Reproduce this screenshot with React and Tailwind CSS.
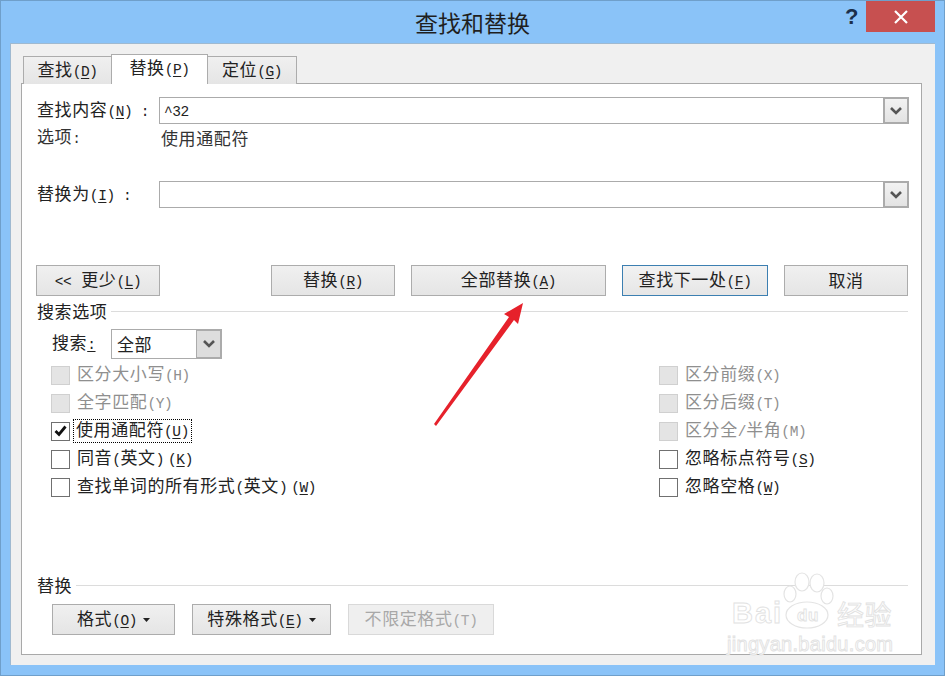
const FONT = "font-['Noto_Sans_CJK_SC',sans-serif]";
const LATIN = "font-['Liberation_Mono',monospace] text-[14.5px] tracking-[-0.4px]";

// "&X" marks the mnemonic letter, as in a Win32 dialog resource
function Txt({ children }) {
  const parts = children.match(/&.|[\x00-\x7f]+?(?=&|[^\x00-\x7f]|$)|[^\x00-\x7f&]+/g) || [];
  return (
    <span className="inline-block whitespace-pre pb-[2px]">
      {parts.map((p, i) => {
        if (p[0] === '&') {
          return <span key={i} className={`${LATIN} underline underline-offset-2`}>{p[1]}</span>;
        }
        if (p.charCodeAt(0) < 128) {
          return <span key={i} className={LATIN}>{p}</span>;
        }
        return <span key={i}>{p}</span>;
      })}
    </span>
  );
}

function Chevron() {
  return (
    <svg width="14" height="10" viewBox="0 0 14 10" fill="none">
      <path d="M2 2 L7 7 L12 2" stroke="#555555" strokeWidth="2.6" />
    </svg>
  );
}

function DropArrow() {
  return (
    <svg className="ml-[6px]" width="7" height="4" viewBox="0 0 7 4">
      <path d="M0 0 H7 L3.5 4 Z" fill="#222222" />
    </svg>
  );
}

function Combo({ children }) {
  return (
    <div className="flex h-[27px] w-[750px] shrink-0 border border-[#ababab] bg-white">
      <div className="flex-1 pl-1 leading-[22px]">{children}</div>
      <div className="-my-px -mr-px flex w-[26px] items-center justify-center border-2 border-[#ababab] bg-gradient-to-b from-[#f2f2f2] to-[#e3e3e3]">
        <Chevron />
      </div>
    </div>
  );
}

function Btn({ className = '', children, focused, disabled }) {
  let tone = 'border-[#acacac] bg-gradient-to-b from-[#f0f0f0] to-[#e5e5e5] text-[#222]';
  if (focused) tone = 'border-[#3c7fb1] bg-gradient-to-b from-[#f2f2f2] to-[#e6e6e6] text-[#222]';
  if (disabled) tone = 'border-[#d9d9d9] bg-[#efefef] text-[#a8a8a8]';
  return (
    <div className={`flex h-[31px] shrink-0 items-center justify-center border ${tone} ${className}`}>
      {children}
    </div>
  );
}

function Check({ label, disabled, checked, focused }) {
  return (
    <div className="flex h-[28px] items-center">
      <div className={`flex h-[19px] w-[19px] items-center justify-center border ${disabled ? 'border-[#d0d0d0] bg-[#e4e4e4]' : 'border-[#707070] bg-white'}`}>
        {checked && (
          <svg width="13" height="12" viewBox="0 0 13 12" fill="none">
            <path d="M1.5 6 L5 9.5 L11.5 1.5" stroke="#111111" strokeWidth="2.8" />
          </svg>
        )}
      </div>
      <div className={`${disabled ? 'text-[#8f8f8f]' : 'text-[#222]'} ${focused ? 'ml-[4px] px-[2px] outline-1 outline-dotted outline-black' : 'ml-[7px]'}`}>
        <Txt>{label}</Txt>
      </div>
    </div>
  );
}

function Section({ title, className = '' }) {
  return (
    <div className={`flex h-[30px] items-center ${className}`}>
      <span className="mr-[4px]"><Txt>{title}</Txt></span>
      <div className="h-px flex-1 bg-[#dcdcdc]" />
    </div>
  );
}

function Watermark() {
  return (
    <svg className="absolute left-[720px] top-[568px]" width="180" height="90" viewBox="0 0 180 90">
      <g fill="#ffffff" stroke="#e4e4e4" strokeWidth="1.2">
        <ellipse cx="81" cy="13" rx="7" ry="9" />
        <ellipse cx="96" cy="14" rx="7" ry="9" />
        <ellipse cx="69" cy="25" rx="6" ry="8" />
        <ellipse cx="106" cy="27" rx="6" ry="8" />
        <ellipse cx="86" cy="46" rx="21" ry="13" />
      </g>
      <g fill="#ffffff" stroke="#e2e2e2" strokeWidth="0.9" fontFamily="'Liberation Sans', sans-serif">
        <text x="11" y="54" fontSize="29" letterSpacing="2" fontWeight="700">Bai</text>
        <text x="76" y="52" fontSize="17" fontWeight="700">du</text>
        <text x="116" y="56" fontSize="27" fontFamily="'Noto Sans CJK SC', sans-serif">经验</text>
        <text x="6" y="82" fontSize="20" letterSpacing="0.3">jingyan.baidu.com</text>
      </g>
    </svg>
  );
}

export default function App() {
  return (
    <div className={`relative h-[676px] w-[945px] overflow-hidden border border-[#6f9fca] bg-[#8ac3f8] px-[9px] text-[17px] leading-none tracking-[0.6px] text-[#222] ${FONT}`}>
      {/* title bar */}
      <div className="relative flex h-[42px] items-center justify-center">
        <span className="text-[23px] tracking-normal text-[#1f1f1f]">查找和替换</span>
        <span className="absolute right-[76px] top-[5px] font-['Liberation_Sans',sans-serif] text-[22px] font-bold text-[#1c2f4a]">?</span>
        <div className="absolute right-0 top-0 flex h-[31px] w-[69px] items-center justify-center bg-[#c75050]">
          <svg width="16" height="14" viewBox="0 0 16 14" fill="none">
            <path d="M2 1 L14 13 M14 1 L2 13" stroke="#ffffff" strokeWidth="2.2" />
          </svg>
        </div>
      </div>

      {/* client area */}
      <div className="h-[622px] w-[925px] border-l border-t border-[#9fb9d0] bg-[#f0f0f0] px-[10px] pt-[10px]">
        {/* tabs */}
        <div className="relative z-10 flex h-[30px] items-end pl-[2px]">
          <div className="flex h-[28px] w-[89px] items-center justify-center border border-b-0 border-[#acacac] bg-gradient-to-b from-[#f0f0f0] to-[#e5e5e5] pt-px">
            <Txt>查找(&D)</Txt>
          </div>
          <div className="-ml-px flex h-[30px] w-[97px] items-center justify-center border border-b-0 border-[#acacac] bg-white pb-[2px]">
            <Txt>替换(&P)</Txt>
          </div>
          <div className="-ml-px flex h-[28px] w-[90px] items-center justify-center border border-b-0 border-[#acacac] bg-gradient-to-b from-[#f0f0f0] to-[#e5e5e5] pt-px">
            <Txt>定位(&G)</Txt>
          </div>
        </div>

        {/* tab page */}
        <div className="-mt-px h-[572px] w-[901px] border border-[#a9a9a9] bg-white px-[15px] pt-[13px]">
          <div className="flex items-center">
            <div className="flex w-[122px] shrink-0"><Txt>查找内容(&N) :</Txt></div>
            <Combo><Txt>^32</Txt></Combo>
          </div>
          <div className="flex h-[28px] items-center text-[#333]">
            <div className="flex w-[124px]"><Txt>选项:</Txt></div>
            <Txt>使用通配符</Txt>
          </div>
          <div className="mt-[29px] flex items-center">
            <div className="flex w-[122px] shrink-0"><Txt>替换为(&I) :</Txt></div>
            <Combo />
          </div>

          {/* action buttons */}
          <div className="-ml-px mt-[57px] flex">
            <Btn className="w-[124px]"><Txt>{'<<'}</Txt><span className="ml-[10px]"><Txt>更少(&L)</Txt></span></Btn>
            <Btn className="ml-[111px] w-[124px]"><Txt>替换(&R)</Txt></Btn>
            <Btn className="ml-[16px] w-[195px]"><Txt>全部替换(&A)</Txt></Btn>
            <Btn focused className="ml-[16px] w-[146px]"><Txt>查找下一处(&F)</Txt></Btn>
            <Btn className="ml-[16px] w-[124px]"><Txt>取消</Txt></Btn>
          </div>

          <Section title="搜索选项" className="w-[871px]" />

          <div className="ml-[15px] mt-[3px] flex h-[30px] items-center">
            <div className="flex w-[59px]"><Txt>搜索&:</Txt></div>
            <div className="flex h-[30px] w-[111px] border border-[#ababab]">
              <span className="flex-1 pl-[5px] leading-[28px]">全部</span>
              <div className="-my-px -mr-px flex w-[26px] items-center justify-center border-2 border-l-1 border-[#ababab] bg-[#dddddd]"><Chevron /></div>
            </div>
          </div>

          {/* options */}
          <div className="ml-[14px] mt-[2px] flex">
            <div className="w-[608px]">
              <Check disabled label="区分大小写(H)" />
              <Check disabled label="全字匹配(Y)" />
              <Check checked focused label="使用通配符(&U)" />
              <Check label={'同音(英文)\u2009(&K)'} />
              <Check label={'查找单词的所有形式(英文)\u2009(&W)'} />
            </div>
            <div>
              <Check disabled label="区分前缀(X)" />
              <Check disabled label="区分后缀(T)" />
              <Check disabled label="区分全/半角(M)" />
              <Check label="忽略标点符号(&S)" />
              <Check label="忽略空格(&W)" />
            </div>
          </div>

          <Section title="替换" className="mt-[69px] w-[871px]" />

          <div className="ml-[15px] mt-[4px] flex items-end">
            <Btn className="w-[123px]"><Txt>格式(&O)</Txt><DropArrow /></Btn>
            <Btn className="ml-[17px] w-[139px]"><Txt>特殊格式(&E)</Txt><DropArrow /></Btn>
            <Btn disabled className="ml-[17px] w-[146px]"><Txt>不限定格式(T)</Txt></Btn>
          </div>
        </div>
      </div>

      {/* annotation drawn over the dialog */}
      <svg className="absolute left-0 top-0" width="945" height="676" viewBox="0 0 945 676" fill="none">
        <path d="M433 423 L435 425 L513 319 L517 323 L522 302 L503 313 L508 316 Z" fill="#e6212b" />
      </svg>
      <Watermark />
    </div>
  );
}
